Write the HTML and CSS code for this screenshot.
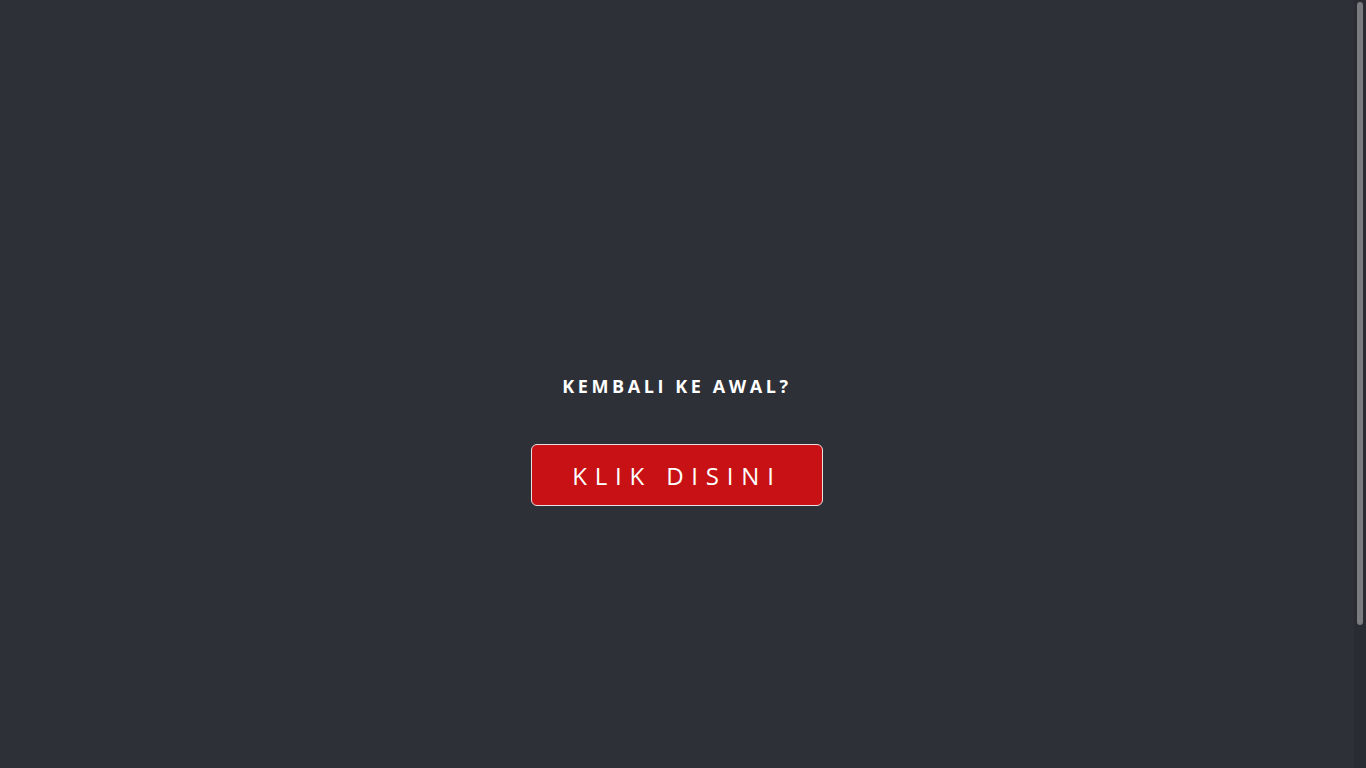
FILE: index.html
```html
<!DOCTYPE html>
<html lang="id">
<head>
<meta charset="utf-8">
<title>Kembali ke awal</title>
<link rel="stylesheet" href="styles.css">
</head>
<body>
<main class="page">
  <section class="cta">
    <h2 class="cta-title">KEMBALI KE AWAL?</h2>
    <a class="cta-button" href="#">KLIK DISINI</a>
  </section>
</main>
<div class="scrollbar" aria-hidden="true"><div class="scrollbar-thumb"></div></div>
</body>
</html>
```
FILE: styles.css
```css
html, body {
  margin: 0;
  padding: 0;
  background: #2e3038;
  overflow: hidden;
}
body {
  padding-right: 12px;
}
.page {
  height: 768px;
  font-family: "Open Sans", "Noto Sans", sans-serif;
  color: #fff;
  display: flex;
  flex-direction: column;
  align-items: center;
  padding-top: 374px;
  box-sizing: border-box;
}
.cta {
  display: flex;
  flex-direction: column;
  align-items: center;
}
.cta-title {
  margin: 0;
  font-size: 18px;
  font-weight: 700;
  letter-spacing: 3.6px;
  line-height: 24px;
  padding-left: 0;
}
.cta-button {
  margin-top: 46px;
  display: flex;
  align-items: center;
  justify-content: center;
  width: 290px;
  height: 60px;
  background: #c71114;
  border: 1px solid #e6e0e0;
  border-radius: 6px;
  color: #fff;
  text-decoration: none;
  font-size: 24px;
  letter-spacing: 7.8px;
  padding-left: 0;
  box-sizing: content-box;
}
.scrollbar {
  position: fixed;
  top: 0;
  right: 0;
  width: 12px;
  height: 768px;
  background: #2a2c33;
  padding: 2px 3px;
  box-sizing: border-box;
}
.scrollbar-thumb {
  height: 623px;
  background: #7b7c80;
  border-radius: 3px;
}
```
